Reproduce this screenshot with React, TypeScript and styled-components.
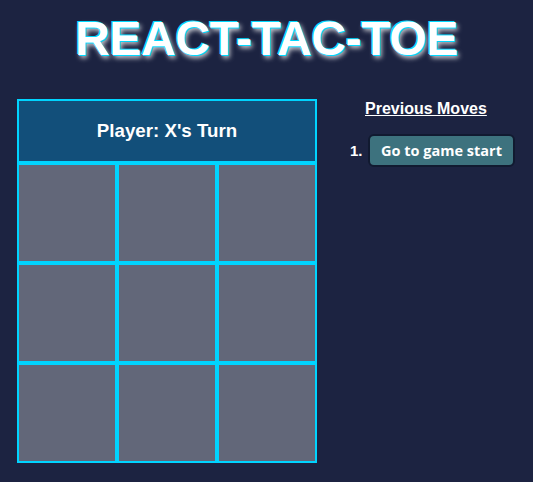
import React from "react";
import styled, { createGlobalStyle } from "styled-components";

const GlobalStyle = createGlobalStyle`
  html, body {
    margin: 0;
    padding: 0;
    background: #1c2341;
  }
  body {
    font-family: "Liberation Sans", Arial, Helvetica, sans-serif;
    color: #ffffff;
  }
`;

const Page = styled.div`
  min-height: 482px;
  background: #1c2341;
  padding-top: 11px;
  box-sizing: border-box;
`;

const Title = styled.h1`
  margin: 0;
  text-align: center;
  font-family: "Liberation Sans", Arial, sans-serif;
  font-size: 48px;
  font-weight: 700;
  letter-spacing: -0.35px;
  line-height: 55px;
  color: #ffffff;
  text-shadow: -1px -1px 0 #00d8ff, 1px 1px 0 #00d8ff, 2px 3px 5px rgba(255, 255, 255, 0.8);
`;

const Game = styled.div`
  display: flex;
  align-items: flex-start;
  padding: 0 17px;
  margin-top: 33px;
`;

const Board = styled.div`
  width: 300px;
  flex-shrink: 0;
  display: flex;
  flex-direction: column;
`;

const Status = styled.div`
  box-sizing: border-box;
  height: 64px;
  border: 2px solid #00d4ff;
  background: #124f7a;
  display: flex;
  align-items: center;
  justify-content: center;
`;

const StatusText = styled.h3`
  margin: 0;
  font-size: 18.72px;
  font-weight: 700;
  color: #ffffff;
`;

const Grid = styled.div`
  display: grid;
  grid-template-columns: repeat(3, 100px);
  grid-template-rows: repeat(3, 100px);
`;

const Cell = styled.button`
  box-sizing: border-box;
  width: 100px;
  height: 100px;
  margin: 0;
  padding: 0;
  border: 2px solid #00d4ff;
  border-radius: 0;
  background: #626779;
  cursor: pointer;
`;

const Info = styled.div`
  display: flex;
  flex-direction: column;
  align-items: flex-start;
  margin-left: 33px;
  padding-top: 1px;
  flex-shrink: 0;
`;

const MovesHeading = styled.h4`
  margin: 0 0 0 15px;
  font-size: 16px;
  font-weight: 700;
  line-height: 18px;
  text-decoration: underline;
  color: #ffffff;
`;

const MoveList = styled.ol`
  list-style: none;
  margin: 16px 0 0 0;
  padding: 0;
`;

const MoveItem = styled.li`
  display: flex;
  align-items: center;
  gap: 6px;
`;

const MoveNumber = styled.span`
  font-size: 15px;
  font-weight: 700;
  color: #ffffff;
  width: 12px;
`;

const MoveButton = styled.button`
  box-sizing: border-box;
  width: 147px;
  height: 33px;
  padding: 0;
  display: inline-flex;
  align-items: center;
  justify-content: center;
  white-space: nowrap;
  border: 2px solid #111a30;
  border-radius: 6px;
  background: #3d727e;
  color: #ffffff;
  font-family: "Open Sans", "Noto Sans", sans-serif;
  font-size: 14.5px;
  font-weight: 700;
  cursor: pointer;
`;

export default function App() {
  const squares = Array(9).fill(null);
  return (
    <Page>
      <GlobalStyle />
      <Title>REACT-TAC-TOE</Title>
      <Game>
        <Board>
          <Status>
            <StatusText>Player: X's Turn</StatusText>
          </Status>
          <Grid>
            {squares.map((_, i) => (
              <Cell key={i} aria-label={`square ${i + 1}`} />
            ))}
          </Grid>
        </Board>
        <Info>
          <MovesHeading>Previous Moves</MovesHeading>
          <MoveList>
            <MoveItem>
              <MoveNumber>1.</MoveNumber>
              <MoveButton>Go to game start</MoveButton>
            </MoveItem>
          </MoveList>
        </Info>
      </Game>
    </Page>
  );
}
